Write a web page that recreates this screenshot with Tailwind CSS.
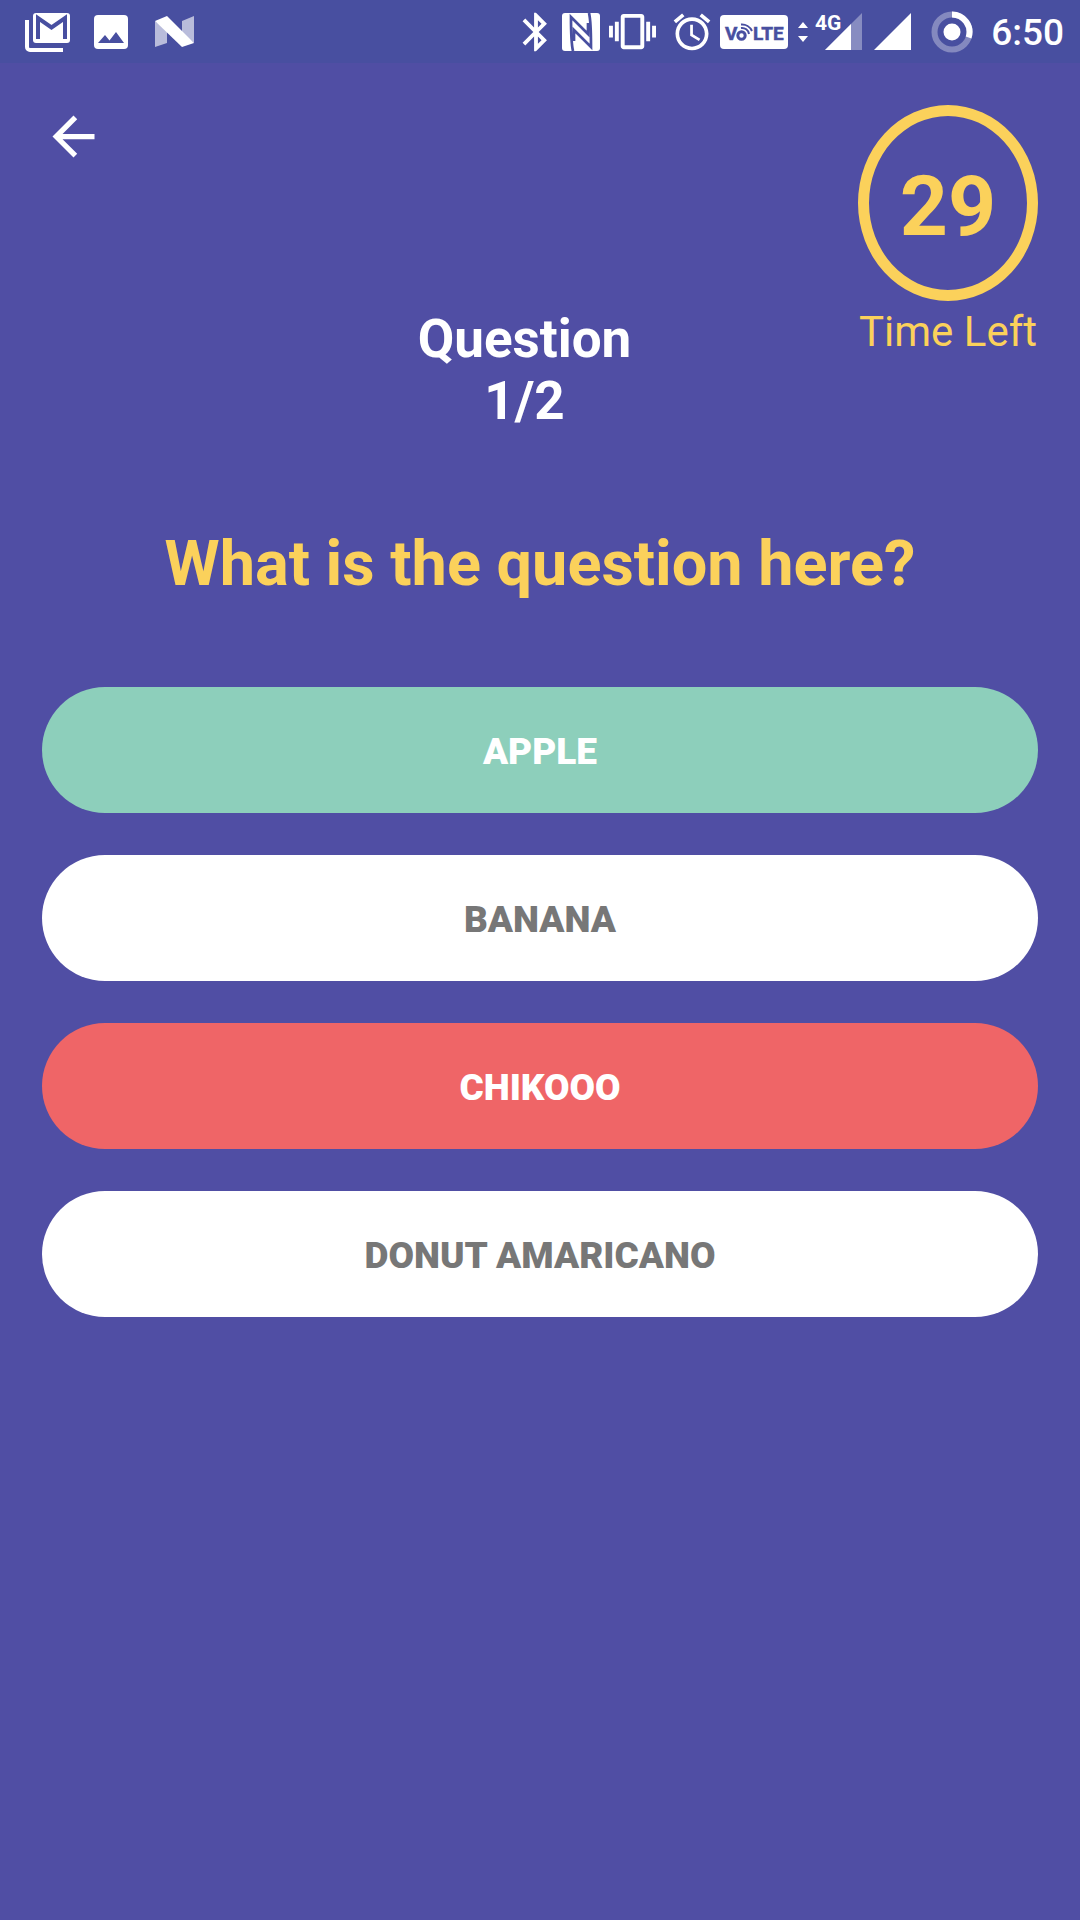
<!DOCTYPE html>
<html lang="en">
<head>
<meta charset="utf-8">
<meta name="viewport" content="width=device-width, initial-scale=1">
<title>Quiz</title>
<script src="https://cdn.jsdelivr.net/npm/@tailwindcss/browser@4"></script>
</head>
<body class="min-h-screen bg-[#504ea4] font-[Roboto,sans-serif] text-white">
  <!-- Status bar -->
  <div class="flex h-[63px] items-center bg-[#484fa0] pl-6 pr-4">
    <div class="flex items-center gap-6">
      <svg class="h-[40px] w-[46px]" viewBox="0 0 46 40" fill="none" aria-label="Gmail">
        <path d="M3 8v27a3 3 0 0 0 3 3h33" stroke="#fff" stroke-width="4"/>
        <rect x="9" y="1" width="37" height="30" rx="3" fill="#fff"/>
        <path d="M14 27V6l13.500 9.500L41 6v21" stroke="#484fa0" stroke-width="4"/>
      </svg>
      <svg class="h-[34px] w-[34px]" viewBox="0 0 34 34" aria-label="Image">
        <rect width="34" height="34" rx="4" fill="#fff"/>
        <path d="M4 28l7-8 4.500 5.500L22 17l8 11z" fill="#484fa0"/>
      </svg>
      <svg class="ml-[3px] h-[32px] w-[39px]" viewBox="0 0 39 32" aria-label="Android Nougat">
        <path d="M0 5L12 14V27L0 31zM27 5L39 0V27L27 17z" fill="#fff" fill-opacity=".62"/>
        <path d="M0 5L12 0 39 27 27 31z" fill="#fff"/>
      </svg>
    </div>
    <div class="ml-auto flex items-center">
      <svg class="h-[46px] w-[46px]" viewBox="0 0 24 24" fill="#fff" aria-label="Bluetooth"><path d="M17.710 7.710L12 2h-1v7.590L6.410 5 5 6.410 10.590 12 5 17.590 6.410 19 11 14.410V22h1l5.710-5.710-4.300-4.290 4.300-4.290zM13 5.830l1.880 1.880L13 9.590V5.830zm1.880 10.460L13 18.170v-3.760l1.880 1.880z"/></svg>
      <svg class="ml-[3px] h-[38px] w-[38px]" viewBox="0 0 38 38" fill="none" aria-label="NFC">
        <rect width="38" height="38" rx="3" fill="#fff"/>
        <path d="M11 38Q9 30 9 4L26 21V10M27 0Q29 8 29 34L12 17V28" stroke="#484fa0" stroke-width="2.700"/>
      </svg>
      <svg class="ml-[9px] h-[47px] w-[47px]" viewBox="0 0 24 24" fill="#fff" aria-label="Vibrate"><path d="M0 15h2V9H0v6zm3 2h2V7H3v10zm19-8v6h2V9h-2zm-3 8h2V7h-2v10zM16.500 3h-9C6.670 3 6 3.670 6 4.500v15c0 .83.670 1.500 1.500 1.500h9c.83 0 1.500-.67 1.500-1.500v-15c0-.83-.67-1.500-1.500-1.500zM16 19H8V5h8v14z"/></svg>
      <svg class="ml-[14px] h-[44px] w-[44px]" viewBox="0 0 24 24" fill="#fff" aria-label="Alarm"><path d="M22 5.720l-4.600-3.860-1.290 1.530 4.600 3.860L22 5.720zM7.880 3.390L6.600 1.860 2 5.710l1.290 1.530 4.590-3.850zM12.500 8H11v6l4.750 2.850.75-1.230-4-2.370V8zM12 4c-4.970 0-9 4.030-9 9s4.020 9 9 9 9-4.030 9-9-4.030-9-9-9zm0 16c-3.870 0-7-3.130-7-7s3.130-7 7-7 7 3.130 7 7-3.130 7-7 7z"/></svg>
      <svg class="ml-[6px] h-[34px] w-[68px]" viewBox="0 0 68 34" aria-label="VoLTE">
        <rect width="68" height="34" rx="4" fill="#fff"/>
        <g fill="#484fa0" stroke="#484fa0" stroke-width=".5" font-family="Roboto, sans-serif" font-weight="700">
          <text x="5" y="25" font-size="19">V</text>
          <text x="33" y="25" font-size="19">LTE</text>
        </g>
        <g fill="none" stroke="#484fa0">
          <circle cx="21.500" cy="20.500" r="3.700" stroke-width="3"/>
          <path d="M21 13a7 7 0 0 1 8 6M21 9.500a11 11 0 0 1 11 6.500" stroke-width="2"/>
        </g>
      </svg>
      <svg class="ml-[10px] h-[20px] w-[10px]" viewBox="0 0 10 20" fill="#fff" aria-label="Data activity"><path d="M5 0l5 6H0zM5 20l5-6H0z"/></svg>
      <svg class="ml-2 h-[38px] w-[46px] overflow-visible" viewBox="0 0 46 38" fill="#fff" aria-label="4G signal">
        <path d="M9 37L46 0V37z" fill-opacity=".35"/>
        <path d="M9 37L35 11V37z"/>
        <text x="-1" y="17" font-family="Roboto, sans-serif" font-weight="700" font-size="21">4G</text>
      </svg>
      <svg class="ml-3 h-[38px] w-[37px]" viewBox="0 0 37 38" fill="#fff" aria-label="Signal"><path d="M0 37L37 0V37z"/></svg>
      <svg class="ml-5 h-[42px] w-[42px]" viewBox="0 0 42 42" fill="none" aria-label="Battery">
        <circle cx="21" cy="21" r="17.500" stroke="#fff" stroke-opacity=".33" stroke-width="6"/>
        <path d="M21 3.500A17.500 17.500 0 0 1 37.600 26.500" stroke="#fff" stroke-width="6"/>
        <circle cx="21" cy="21" r="8.500" fill="#fff"/>
      </svg>
      <time class="ml-[18px] pt-[3px] text-[37px] leading-[42px] font-medium">6:50</time>
    </div>
  </div>

  <main class="px-[42px] pt-[42px]">
    <header class="flex items-start">
      <button type="button" aria-label="Back" class="shrink-0">
        <svg class="h-[63px] w-[63px]" viewBox="0 0 24 24" fill="#fff"><path d="M20 11H7.830l5.590-5.590L12 4l-8 8 8 8 1.410-1.410L7.830 13H20v-2z"/></svg>
      </button>
      <h1 class="mt-[203px] flex-1 pl-[86px] text-center text-[53px] leading-[62px] font-bold">Question<br>1/2</h1>
      <div class="flex w-[180px] shrink-0 flex-col items-center text-[#fbd15b]">
        <div class="flex h-[196px] w-full items-center justify-center rounded-[50%] border-[11px] border-[#fbd15b] pt-2 text-[84px] leading-[98px] font-bold">29</div>
        <div class="mt-[6px] text-[42px] leading-[50px] whitespace-nowrap">Time Left</div>
      </div>
    </header>

    <h2 class="mt-[95px] text-center text-[63px] leading-[74px] font-bold text-[#fbd15b]">What is the question here?</h2>

    <div class="mt-[86px] flex flex-col gap-[42px] text-[37px] leading-[44px] font-black">
      <button type="button" class="h-[126px] rounded-full bg-[#8dcfbb] pt-1">APPLE</button>
      <button type="button" class="h-[126px] rounded-full bg-white pt-1 text-[#777777]">BANANA</button>
      <button type="button" class="h-[126px] rounded-full bg-[#ef6567] pt-1">CHIKOOO</button>
      <button type="button" class="h-[126px] rounded-full bg-white pt-1 text-[#777777]">DONUT AMARICANO</button>
    </div>
  </main>
</body>
</html>
